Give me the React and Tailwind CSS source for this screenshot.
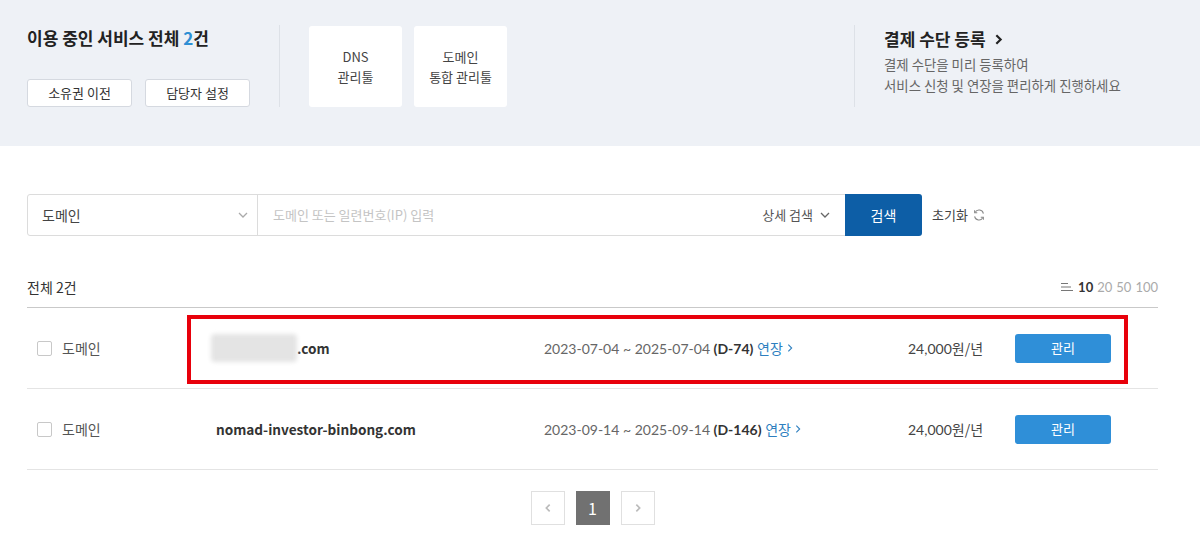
import { useState } from 'react';

const kr = { fontFamily: "'Noto Sans CJK KR', 'Noto Sans', sans-serif" };
const lato = { fontFamily: "Lato, 'Noto Sans CJK KR', sans-serif" };

const Chevron = ({ className = '', dir = 'down' }) => {
  const d = {
    down: 'M2 4l4 4 4-4',
    right: 'M4 2l4 4-4 4',
    left: 'M8 2L4 6l4 4',
  }[dir];
  return (
    <svg viewBox="0 0 12 12" className={className} fill="none" stroke="currentColor" strokeWidth="1.3">
      <path d={d} />
    </svg>
  );
};

const domains = [
  { name: 'g.com', hidden: true, period: '2023-07-04 ~ 2025-07-04', dday: 'D-74' },
  { name: 'nomad-investor-binbong.com', period: '2023-09-14 ~ 2025-09-14', dday: 'D-146' },
];

const DomainRow = ({ item }) => (
  <div className="flex items-center h-[81px] border-b border-[#e4e4e4] text-[14px]">
    <label className="flex items-center w-[189px] pl-[10px]">
      <span className="w-[15px] h-[15px] border border-[#c8c8c8] rounded-[2px] bg-white" />
      <span className="ml-[10px] text-[#555]" style={kr}>도메인</span>
    </label>
    <div className="w-[328px] flex items-center font-bold text-[#333] text-[13.6px]" style={kr}>
      {item.hidden ? (
        <>
          <span className="-ml-[5px] w-[86px] h-[28px] bg-[#e4e4e4] blur-[2px] rounded-sm" />
          <span>{item.name.slice(1)}</span>
        </>
      ) : (
        item.name
      )}
    </div>
    <div className="w-[364px] text-[#666]" style={lato}>
      {item.period} <b className="text-[#333]">({item.dday})</b>{' '}
      <span className="text-[#2e7fbf] inline-flex items-center" style={kr}>
        연장<Chevron dir="right" className="w-[10px] h-[10px] ml-[2px]" />
      </span>
    </div>
    <div className="w-[107px] text-[#444]" style={lato}>
      24,000<span style={kr}>원/년</span>
    </div>
    <button className="w-[96px] h-[29px] rounded-[3px] bg-[#2f8fd8] text-white text-[13px]" style={kr}>
      관리
    </button>
  </div>
);

export default function App() {
  const [perPage, setPerPage] = useState(10);

  return (
    <div className="w-[1200px] h-[546px] bg-white overflow-hidden relative" style={kr}>
      <section className="h-[146px] bg-[#eef1f6] flex items-start pt-[25px]">
        <div className="w-[279px] pl-[27px] h-[82px] flex flex-col justify-between">
          <h2 className="text-[17px] font-bold text-[#222] leading-[28px] -mt-[1px]">
            이용 중인 서비스 전체 <span className="text-[#2e8fd4]">2</span>건
          </h2>
          <div className="flex gap-[13px]">
            <button className="w-[105px] h-[28px] bg-white border border-[#d5d9e0] rounded-[3px] text-[13px] text-[#333]">소유권 이전</button>
            <button className="w-[105px] h-[28px] bg-white border border-[#d5d9e0] rounded-[3px] text-[13px] text-[#333]">담당자 설정</button>
          </div>
        </div>
        <div className="w-px h-[82px] bg-[#dde1e7]" />
        <div className="flex gap-[12px] pl-[29px] pt-[1px] w-[574px]">
          <div className="w-[93px] h-[81px] bg-white rounded-[3px] flex flex-col items-center justify-center text-[13px] text-[#444] leading-[20px]">
            <span>DNS</span>
            <span>관리툴</span>
          </div>
          <div className="w-[93px] h-[81px] bg-white rounded-[3px] flex flex-col items-center justify-center text-[13px] text-[#444] leading-[20px]">
            <span>도메인</span>
            <span>통합 관리툴</span>
          </div>
        </div>
        <div className="w-px h-[82px] bg-[#dde1e7]" />
        <div className="pl-[29px] pt-[1px]">
          <h3 className="text-[17px] font-bold text-[#222] flex items-center leading-[26px]">
            결제 수단 등록
            <Chevron dir="right" className="w-[13px] h-[13px] ml-[6px] stroke-2" />
          </h3>
          <p className="text-[13.4px] text-[#666] leading-[21px] mt-[2px]">
            결제 수단을 미리 등록하여
            <br />
            서비스 신청 및 연장을 편리하게 진행하세요
          </p>
        </div>
      </section>

      <div className="px-[27px] pt-[48px]">
        <div className="flex items-center">
          <div className="flex w-[819px] h-[42px] border border-[#dcdcdc] rounded-l-[3px] text-[14px]">
            <div className="w-[230px] flex items-center justify-between pl-[14px] pr-[8px] border-r border-[#dcdcdc] text-[#444]">
              <span>도메인</span>
              <Chevron className="w-[12px] h-[12px] text-[#aaa]" />
            </div>
            <div className="flex-1 flex items-center justify-between pl-[15px] pr-[14px]">
              <span className="text-[#c4c4c4] text-[13px]">도메인 또는 일련번호(IP) 입력</span>
              <span className="flex items-center text-[#555] text-[13px]">
                상세 검색
                <Chevron className="w-[12px] h-[12px] ml-[6px] text-[#666]" />
              </span>
            </div>
          </div>
          <button className="w-[77px] h-[42px] bg-[#0d5ea6] text-white text-[14px] rounded-r-[3px] -ml-px">검색</button>
          <span className="ml-[10px] flex items-center text-[13px] text-[#444]">
            초기화
            <svg viewBox="0 0 16 16" className="w-[14px] h-[14px] ml-[4px] text-[#888]" fill="none" stroke="currentColor" strokeWidth="1.2">
              <path d="M13 6.5A5 5 0 0 0 3.6 5" />
              <path d="M3 2.5V5.5h3" />
              <path d="M3 9.5A5 5 0 0 0 12.4 11" />
              <path d="M13 13.5V10.5h-3" />
            </svg>
          </span>
        </div>

        <div className="w-[1131px] mt-[41px] flex items-end justify-between pb-[9px] border-b border-[#c9c9c9]">
          <span className="text-[14px] text-[#333]">전체 2건</span>
          <div className="flex items-center gap-[4px] text-[13px] text-[#aaa] mb-[1px]" style={lato}>
            <svg viewBox="0 0 12 10" className="w-[12px] h-[10px] mr-[1px] text-[#777]" fill="none" stroke="currentColor" strokeWidth="1">
              <path d="M0 1.5h7M0 5h10M0 8.5h12" />
            </svg>
            {[10, 20, 50, 100].map((n) => (
              <button
                key={n}
                onClick={() => setPerPage(n)}
                className={perPage === n ? 'font-bold text-[#333]' : ''}
              >
                {n}
              </button>
            ))}
          </div>
        </div>

        <div className="w-[1131px]">
          {domains.map((d) => (
            <DomainRow key={d.name} item={d} />
          ))}
        </div>

        <div className="w-[1131px] flex justify-center gap-[11px] mt-[21px]">
          <button className="w-[34px] h-[34px] border border-[#e0e0e0] flex items-center justify-center text-[#bbb]">
            <Chevron dir="left" className="w-[10px] h-[10px] stroke-2" />
          </button>
          <button className="w-[34px] h-[34px] bg-[#717171] text-white text-[16px]" style={kr}>1</button>
          <button className="w-[34px] h-[34px] border border-[#e0e0e0] flex items-center justify-center text-[#bbb]">
            <Chevron dir="right" className="w-[10px] h-[10px] stroke-2" />
          </button>
        </div>
      </div>

      <div className="absolute left-[187px] top-[315px] w-[941px] h-[69px] border-[4px] border-[#e8000b] pointer-events-none" />
    </div>
  );
}
